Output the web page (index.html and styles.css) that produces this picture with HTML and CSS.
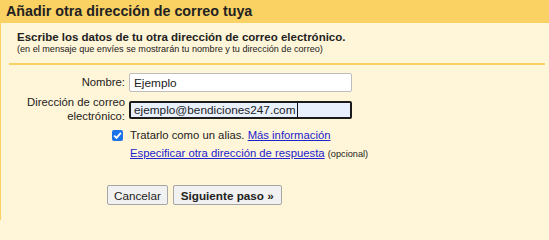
FILE: index.html
```html
<!DOCTYPE html>
<html lang="es">
<head>
<meta charset="utf-8">
<title>Añadir otra dirección de correo tuya</title>
<link rel="stylesheet" href="styles.css">
</head>
<body>
<div class="panel">
  <div class="header">Añadir otra dirección de correo tuya</div>
  <div class="content">
    <div class="intro">
      <div class="intro-title">Escribe los datos de tu otra dirección de correo electrónico.</div>
      <div class="intro-note">(en el mensaje que envíes se mostrarán tu nombre y tu dirección de correo)</div>
    </div>
    <div class="row row-name">
      <div class="label">Nombre:</div>
      <div class="field">Ejemplo</div>
    </div>
    <div class="row row-email">
      <div class="label">Dirección de correo<br>electrónico:</div>
      <div class="field field-focus">ejemplo@bendiciones247.com<span class="caret"></span></div>
    </div>
    <div class="row row-alias">
      <div class="label check-cell"><span class="checkbox"><svg viewBox="0 0 11 11" width="11" height="11"><path d="M2.2 5.6 L4.5 7.9 L8.9 2.8" fill="none" stroke="#fff" stroke-width="1.8"/></svg></span></div>
      <div class="option">Tratarlo como un alias. <a href="#" class="link">Más información</a></div>
    </div>
    <div class="row row-reply">
      <div class="label"></div>
      <div class="option"><a href="#" class="link">Especificar otra dirección de respuesta</a> <span class="small">(opcional)</span></div>
    </div>
    <div class="buttons">
      <button class="btn">Cancelar</button>
      <button class="btn btn-primary">Siguiente paso »</button>
    </div>
  </div>
</div>
</body>
</html>
```

FILE: styles.css
```css
html, body {
  margin: 0;
  padding: 0;
  background: #fff5d8;
}
body {
  font-family: "Liberation Sans", Arial, sans-serif;
  color: #222;
}
.panel {
  border-left: 1px solid #fad163;
  height: 220px;
  box-sizing: border-box;
  overflow: hidden;
}
.header {
  background: #fad163;
  height: 23px;
  line-height: 23px;
  padding-left: 5px;
  font-size: 14.3px;
  font-weight: bold;
  color: #222;
}
.content {
  padding: 8px 4px 0 8px;
}
.intro {
  border-bottom: 2px solid #fad163;
  padding: 0 0 9px 8px;
}
.intro-title {
  font-size: 11.5px;
  font-weight: bold;
  line-height: 13px;
}
.intro-note {
  font-size: 9.1px;
  line-height: 10px;
}
.row {
  display: flex;
  align-items: center;
  gap: 4px;
  font-size: 11.3px;
  white-space: nowrap;
}
.row-name {
  margin-top: 8px;
}
.row-email {
  margin-top: 4px;
}
.row-alias {
  margin-top: 5px;
}
.row-reply {
  margin-top: 4px;
}
.label {
  flex: none;
  width: 116px;
  text-align: right;
  line-height: 13.5px;
}
.field {
  flex: none;
  width: 223px;
  height: 19px;
  box-sizing: border-box;
  border: 1px solid #bdbdbd;
  border-radius: 2px;
  background: #fff;
  padding: 0 4px;
  font-size: 11.8px;
  display: flex;
  align-items: center;
}
.field-focus {
  height: 18px;
  border: 2px solid #1b1b1b;
  background: #e8f0fe;
  padding: 0 3px;
}
.caret {
  display: inline-block;
  width: 1px;
  height: 14px;
  background: #111;
  margin-left: 1px;
}
.check-cell {
  display: flex;
  justify-content: flex-end;
  align-items: center;
  box-sizing: border-box;
  padding-right: 2px;
  height: 14px;
}
.checkbox {
  width: 11px;
  height: 11px;
  background: #1a73e8;
  border-radius: 2px;
  display: flex;
  align-items: center;
  justify-content: center;
}
.checkbox svg {
  display: block;
}
.option {
  line-height: 14px;
  padding-left: 1px;
}
.link {
  color: #2222cc;
  text-decoration: underline;
}
.small {
  font-size: 9.2px;
}
.buttons {
  display: flex;
  gap: 5px;
  margin: 24px 0 0 98px;
}
.btn {
  font-family: "Liberation Sans", Arial, sans-serif;
  font-size: 11.7px;
  height: 20px;
  padding: 0 6px;
  border: 1px solid #a6a6a6;
  border-radius: 2px;
  background: #f1f1f1;
  color: #222;
}
.btn-primary {
  font-weight: bold;
  padding: 0 7px;
}
```
